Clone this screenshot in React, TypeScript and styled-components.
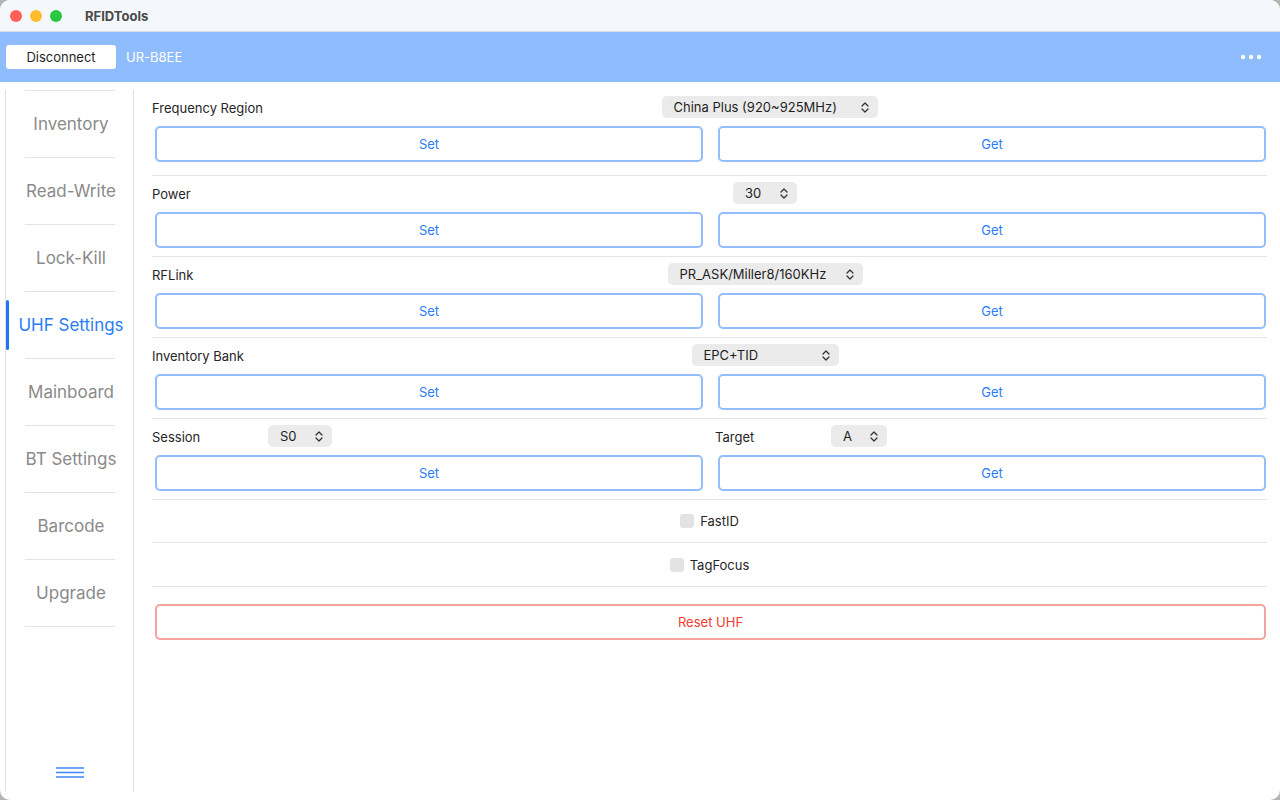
import styled, { createGlobalStyle } from "styled-components";

const GlobalStyle = createGlobalStyle`
  html, body {
    margin: 0;
    padding: 0;
    background: #b4b4b4;
  }
  body {
    font-family: Inter, "Noto Sans", "Liberation Sans", sans-serif;
    font-size: 13px;
    color: #262626;
  }
`;

const navItems = [
  "Inventory",
  "Read-Write",
  "Lock-Kill",
  "UHF Settings",
  "Mainboard",
  "BT Settings",
  "Barcode",
  "Upgrade",
];

const Chevron = () => (
  <svg width="8" height="11" viewBox="0 0 8 11">
    <path
      d="M1 4 L4 1 L7 4 M1 7 L4 10 L7 7"
      fill="none"
      stroke="#333"
      strokeWidth="1.3"
      strokeLinecap="round"
      strokeLinejoin="round"
    />
  </svg>
);

const Picker = ({ value, width }: { value: string; width: number }) => (
  <Select $width={width}>
    <span>{value}</span>
    <Chevron />
  </Select>
);

const ButtonPair = () => (
  <Buttons>
    <ActionButton>Set</ActionButton>
    <ActionButton>Get</ActionButton>
  </Buttons>
);

const App = () => {
  return (
    <>
      <GlobalStyle />
      <Window>
        <TitleBar>
          <Lights>
            <Light $color="#ff5f57" />
            <Light $color="#febc2e" />
            <Light $color="#28c840" />
          </Lights>
          <AppName>RFIDTools</AppName>
        </TitleBar>

        <Header>
          <DisconnectButton>Disconnect</DisconnectButton>
          <DeviceName>UR-B8EE</DeviceName>
          <MoreDots>
            <svg width="22" height="6" viewBox="0 0 22 6">
              <circle cx="3" cy="3" r="2.2" fill="#fff" />
              <circle cx="11" cy="3" r="2.2" fill="#fff" />
              <circle cx="19" cy="3" r="2.2" fill="#fff" />
            </svg>
          </MoreDots>
        </Header>

        <Body>
          <Sidebar>
            <NavDivider />
            {navItems.map((name, i) => (
              <div key={name}>
                <NavItem $active={i === 3}>
                  {i === 3 && <ActiveBar />}
                  {name}
                </NavItem>
                <NavDivider />
              </div>
            ))}
            <Spacer />
            <MenuIcon>
              <svg width="28" height="11" viewBox="0 0 28 11">
                <path
                  d="M0 1 H28 M0 5.5 H28 M0 10 H28"
                  stroke="#3f87f7"
                  strokeWidth="1.6"
                />
              </svg>
            </MenuIcon>
          </Sidebar>

          <Content>
            <Section $top={14} $bottom={13}>
              <PickerRow>
                <Label $width={120}>Frequency Region</Label>
                <PickerSlot>
                  <Picker value="China Plus (920~925MHz)" width={216} />
                </PickerSlot>
              </PickerRow>
              <ButtonPair />
            </Section>

            <Section>
              <PickerRow>
                <Label $width={111}>Power</Label>
                <PickerSlot>
                  <Picker value="30" width={64} />
                </PickerSlot>
              </PickerRow>
              <ButtonPair />
            </Section>

            <Section>
              <PickerRow>
                <Label $width={111}>RFLink</Label>
                <PickerSlot>
                  <Picker value="PR_ASK/Miller8/160KHz" width={195} />
                </PickerSlot>
              </PickerRow>
              <ButtonPair />
            </Section>

            <Section>
              <PickerRow>
                <Label $width={111}>Inventory Bank</Label>
                <PickerSlot>
                  <Picker value="EPC+TID" width={147} />
                </PickerSlot>
              </PickerRow>
              <ButtonPair />
            </Section>

            <Section>
              <SplitRow>
                <PickerRow>
                  <Label $width={116}>Session</Label>
                  <Picker value="S0" width={64} />
                </PickerRow>
                <PickerRow>
                  <Label $width={116}>Target</Label>
                  <Picker value="A" width={56} />
                </PickerRow>
              </SplitRow>
              <ButtonPair />
            </Section>

            <CheckRow>
              <CheckBox />
              <span>FastID</span>
            </CheckRow>
            <CheckRow>
              <CheckBox />
              <span>TagFocus</span>
            </CheckRow>

            <ResetButton>Reset UHF</ResetButton>
          </Content>
        </Body>
      </Window>
    </>
  );
};

const Window = styled.div`
  width: 1280px;
  height: 800px;
  border-radius: 10px;
  overflow: hidden;
  background: #fff;
  display: flex;
  flex-direction: column;
`;

const TitleBar = styled.div`
  height: 31px;
  border-bottom: 1px solid #dcdfe4;
  background: #f4f7fc;
  display: flex;
  align-items: center;
  padding-left: 10px;
`;

const Lights = styled.div`
  display: flex;
  gap: 8px;
`;

const Light = styled.span<{ $color: string }>`
  width: 12px;
  height: 12px;
  border-radius: 50%;
  background: ${(p) => p.$color};
`;

const AppName = styled.div`
  margin-left: 23px;
  font-weight: 700;
  font-size: 13px;
  color: #4a4a4a;
`;

const Header = styled.div`
  height: 50px;
  background: #8fbcfd;
  display: flex;
  align-items: center;
  padding: 0 18px 0 6px;
`;

const DisconnectButton = styled.button`
  width: 110px;
  height: 24px;
  border: none;
  border-radius: 3px;
  background: #fff;
  color: #1f1f1f;
  font: inherit;
  font-size: 13px;
  padding: 0;
`;

const DeviceName = styled.div`
  margin-left: 10px;
  color: #fff;
  font-size: 13px;
`;

const MoreDots = styled.div`
  margin-left: auto;
  display: flex;
`;

const Body = styled.div`
  flex: 1;
  display: flex;
  min-height: 0;
`;

const Sidebar = styled.nav`
  width: 127px;
  margin: 8px 0 8px 5px;
  border-left: 1px solid #e2e2e2;
  border-right: 1px solid #e2e2e2;
  display: flex;
  flex-direction: column;
`;

const NavDivider = styled.div`
  width: 90px;
  height: 1px;
  margin: 0 auto;
  background: #e3e3e3;
`;

const NavItem = styled.div<{ $active?: boolean }>`
  position: relative;
  height: 66px;
  display: flex;
  align-items: center;
  justify-content: center;
  padding-left: 3px;
  font-size: 17px;
  color: ${(p) => (p.$active ? "#2b7df6" : "#8a8a8a")};
`;

const ActiveBar = styled.span`
  position: absolute;
  left: 0;
  top: 8px;
  width: 3px;
  height: 50px;
  border-radius: 2px;
  background: #1f75f4;
`;

const Spacer = styled.div`
  flex: 1;
`;

const MenuIcon = styled.div`
  display: flex;
  justify-content: center;
  margin-bottom: 14px;
`;

const Content = styled.main`
  flex: 1;
  padding: 0 13px 0 18px;
  display: flex;
  flex-direction: column;
`;

const Section = styled.section<{ $top?: number; $bottom?: number }>`
  padding: ${(p) => p.$top ?? 6}px 0 ${(p) => p.$bottom ?? 8}px;
  border-bottom: 1px solid #e6e6e6;
  display: flex;
  flex-direction: column;
  gap: 8px;
`;

const PickerRow = styled.div`
  height: 22px;
  display: flex;
  align-items: center;
`;

const SplitRow = styled.div`
  display: grid;
  grid-template-columns: 563px 1fr;
`;

const Label = styled.div<{ $width: number }>`
  width: ${(p) => p.$width}px;
  flex-shrink: 0;
  padding-top: 1px;
  color: #262626;
`;

const PickerSlot = styled.div`
  flex: 1;
  display: flex;
  justify-content: center;
`;

const Select = styled.div<{ $width: number }>`
  width: ${(p) => p.$width}px;
  height: 22px;
  box-sizing: border-box;
  padding: 0 9px 0 12px;
  border-radius: 5px;
  background: #ebebeb;
  display: flex;
  align-items: center;
  justify-content: space-between;
  color: #1f1f1f;
`;

const Buttons = styled.div`
  display: grid;
  grid-template-columns: 1fr 1fr;
  gap: 15px;
  padding: 0 1px 0 3px;
`;

const ActionButton = styled.button`
  height: 36px;
  border: 2px solid #93bdfb;
  border-radius: 5px;
  background: #fff;
  color: #2b7cf6;
  font: inherit;
  font-size: 13px;
`;

const CheckRow = styled.label`
  height: 42px;
  border-bottom: 1px solid #e6e6e6;
  display: flex;
  align-items: center;
  justify-content: center;
  gap: 6px;
  color: #262626;
  &:last-of-type {
    height: 43px;
  }
`;

const CheckBox = styled.span`
  width: 14px;
  height: 14px;
  border-radius: 3px;
  background: #e3e3e3;
`;

const ResetButton = styled.button`
  margin: 17px 1px 0 3px;
  height: 36px;
  border: 2px solid #f6a29e;
  border-radius: 5px;
  background: #fff;
  color: #f23b30;
  font: inherit;
  font-size: 13px;
`;

export default App;
